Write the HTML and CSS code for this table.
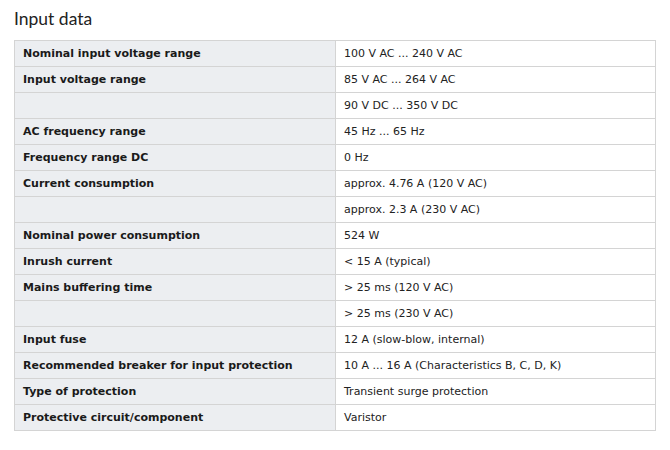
FILE: index.html
```html
<!DOCTYPE html>
<html>
<head>
<meta charset="utf-8">
<link rel="stylesheet" href="styles.css">
</head>
<body>
<h2 class="title">Input data</h2>
<table class="spec">
<tbody>
<tr><th>Nominal input voltage range</th><td>100 V AC ... 240 V AC</td></tr>
<tr><th>Input voltage range</th><td>85 V AC ... 264 V AC</td></tr>
<tr><th></th><td>90 V DC ... 350 V DC</td></tr>
<tr><th>AC frequency range</th><td>45 Hz ... 65 Hz</td></tr>
<tr><th>Frequency range DC</th><td>0 Hz</td></tr>
<tr><th>Current consumption</th><td>approx. 4.76 A (120 V AC)</td></tr>
<tr><th></th><td>approx. 2.3 A (230 V AC)</td></tr>
<tr><th>Nominal power consumption</th><td>524 W</td></tr>
<tr><th>Inrush current</th><td>&lt; 15 A (typical)</td></tr>
<tr><th>Mains buffering time</th><td>&gt; 25 ms (120 V AC)</td></tr>
<tr><th></th><td>&gt; 25 ms (230 V AC)</td></tr>
<tr><th>Input fuse</th><td>12 A (slow-blow, internal)</td></tr>
<tr><th>Recommended breaker for input protection</th><td>10 A ... 16 A (Characteristics B, C, D, K)</td></tr>
<tr><th>Type of protection</th><td>Transient surge protection</td></tr>
<tr><th>Protective circuit/component</th><td>Varistor</td></tr>
</tbody>
</table>
</body>
</html>
```
FILE: styles.css
```css
html, body {
  margin: 0;
  padding: 0;
  background: #ffffff;
}
body {
  padding: 0 14px;
}
.title {
  margin: 0;
  padding-top: 8px;
  height: 40px;
  box-sizing: border-box;
  font-family: "Lato", "Open Sans", sans-serif;
  font-weight: 400;
  font-size: 17.5px;
  line-height: 22px;
  color: #222222;
}
.spec {
  width: 642px;
  border-collapse: collapse;
  table-layout: fixed;
  font-family: "DejaVu Sans", Verdana, sans-serif;
  font-size: 11px;
  color: #1a1a1a;
}
.spec th,
.spec td {
  height: 26px;
  padding: 0 8px;
  border: 1px solid #d4d4d4;
  text-align: left;
  vertical-align: middle;
  box-sizing: border-box;
}
.spec th {
  width: 321px;
  background: #eceef1;
  font-weight: bold;
}
.spec td {
  background: #ffffff;
  font-weight: normal;
  color: #222222;
}
```
